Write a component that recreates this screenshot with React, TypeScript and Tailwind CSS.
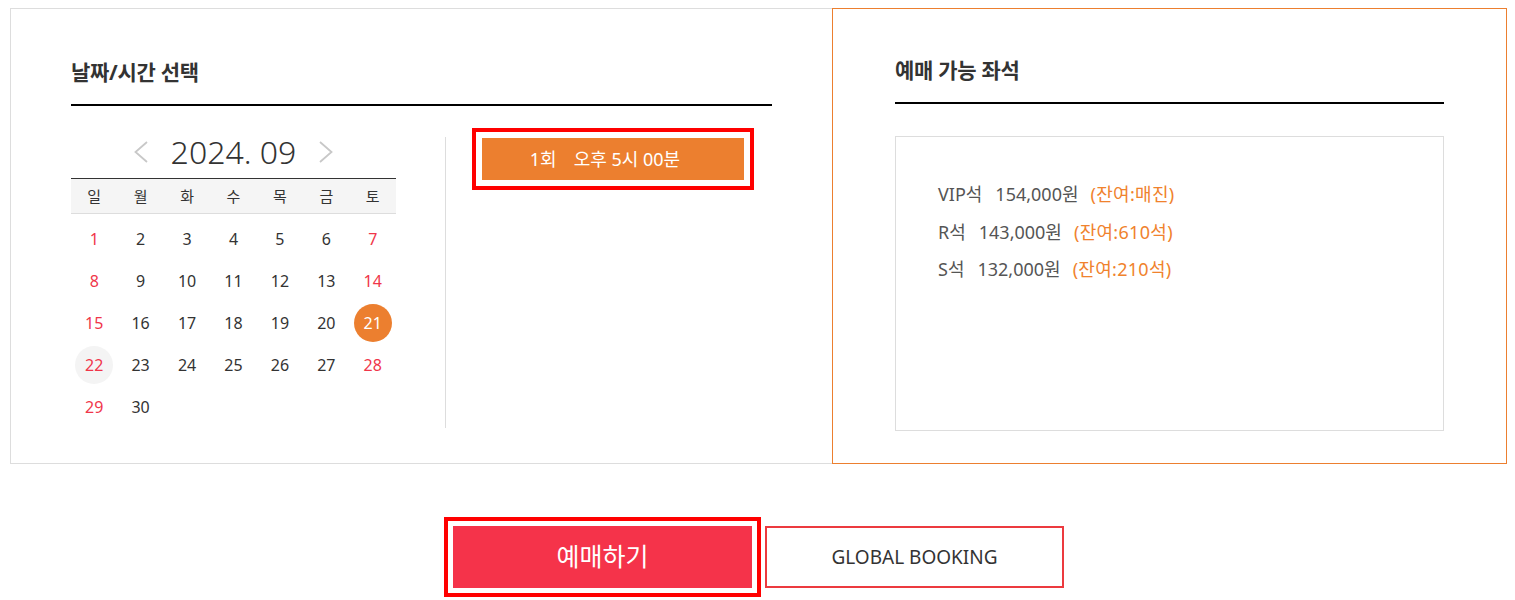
import React from 'react';

const weekdays = ['일', '월', '화', '수', '목', '금', '토'];
const days = Array.from({ length: 30 }, (_, i) => i + 1);

const seats = [
  { name: 'VIP석', price: '154,000원', left: '(잔여:매진)' },
  { name: 'R석', price: '143,000원', left: '(잔여:610석)' },
  { name: 'S석', price: '132,000원', left: '(잔여:210석)' },
];

const Chevron: React.FC<{ dir: 'left' | 'right' }> = ({ dir }) => (
  <svg width="14" height="22" viewBox="0 0 14 22" fill="none">
    <polyline
      points={dir === 'left' ? '13,1 1.5,11 13,21' : '1,1 12.5,11 1,21'}
      stroke="#c8c8c8"
      strokeWidth="1.8"
    />
  </svg>
);

const App: React.FC = () => {
  return (
    <div className="min-h-screen bg-white font-['Noto_Sans','Noto_Sans_CJK_KR',sans-serif] text-[#333]">
      <div className="ml-[10px] w-[1497px] pt-[8px]">
        <div className="flex">
          {/* date / time */}
          <div className="w-[822px] h-[456px] border border-r-0 border-[#ddd] px-[60px] pt-[48px]">
            <h2 className="h-[30px] leading-[30px] text-[21px] font-bold tracking-[-0.3px] text-[#333] pb-[17px] box-content border-b-2 border-black">
              날짜/시간 선택
            </h2>

            <div className="flex mt-[31px]">
              <div className="w-[325px]">
                <div className="flex items-center justify-center gap-[23px] h-[30px] mb-[11px]">
                  <Chevron dir="left" />
                  <span className="text-[32px] font-light leading-[30px] text-[#333]">2024. 09</span>
                  <Chevron dir="right" />
                </div>

                <div className="grid grid-cols-7 h-[36px] items-center border-t border-t-[#333] border-b border-b-[#ddd] bg-[#f5f5f5] text-[15px] text-[#333]">
                  {weekdays.map((d) => (
                    <div key={d} className="text-center">{d}</div>
                  ))}
                </div>

                <div className="grid grid-cols-7 pt-[4px]">
                  {days.map((d) => {
                    const col = (d - 1) % 7;
                    const weekend = col === 0 || col === 6;
                    let cls = weekend ? 'text-[#f0364a]' : 'text-[#333]';
                    if (d === 21) cls = 'bg-[#ec7f2f] text-white';
                    if (d === 22) cls = 'bg-[#f4f4f4] text-[#f0364a]';
                    return (
                      <div key={d} className="h-[42px] flex items-center justify-center">
                        <span className={`w-[38px] h-[38px] rounded-full flex items-center justify-center text-[16px] ${cls}`}>
                          {d}
                        </span>
                      </div>
                    );
                  })}
                </div>
              </div>

              <div className="ml-[49px] h-[291px] border-l border-[#ddd] pl-[36px] pt-[1px]">
                <button className="w-[262px] h-[42px] flex items-center justify-center pr-[16px] bg-[#ec7f2f] text-white text-[18px] outline-4 outline-offset-[6px] outline-[#ff0000]">
                  <span>1회</span>
                  <span className="ml-[17px]">오후 5시 00분</span>
                </button>
              </div>
            </div>
          </div>

          {/* available seats */}
          <div className="w-[675px] h-[456px] border border-[#ec7f2f] px-[62px] pt-[46px]">
            <h2 className="h-[30px] leading-[30px] text-[21px] font-bold tracking-[-0.3px] text-[#333] pb-[17px] box-content border-b-2 border-black">
              예매 가능 좌석
            </h2>
            <div className="mt-[32px] h-[295px] border border-[#ddd] pl-[42px] pt-[39px]">
              {seats.map((s) => (
                <div key={s.name} className="flex items-center h-[37.5px] text-[18px] text-[#555]">
                  <span>{s.name}</span>
                  <span className="ml-[13px]">{s.price}</span>
                  <span className="ml-[12px] text-[#f0822d] tracking-[0.3px]">{s.left}</span>
                </div>
              ))}
            </div>
          </div>
        </div>

        <div className="flex justify-center gap-[13px] mt-[62px]">
          <button className="w-[299px] h-[62px] bg-[#f5334a] text-white text-[25px] outline-4 outline-offset-[5px] outline-[#ff0000]">
            예매하기
          </button>
          <button className="w-[299px] h-[62px] border-2 border-[#ec3a3f] bg-white text-[#333] text-[19px]">
            GLOBAL BOOKING
          </button>
        </div>
      </div>
    </div>
  );
};

export default App;
